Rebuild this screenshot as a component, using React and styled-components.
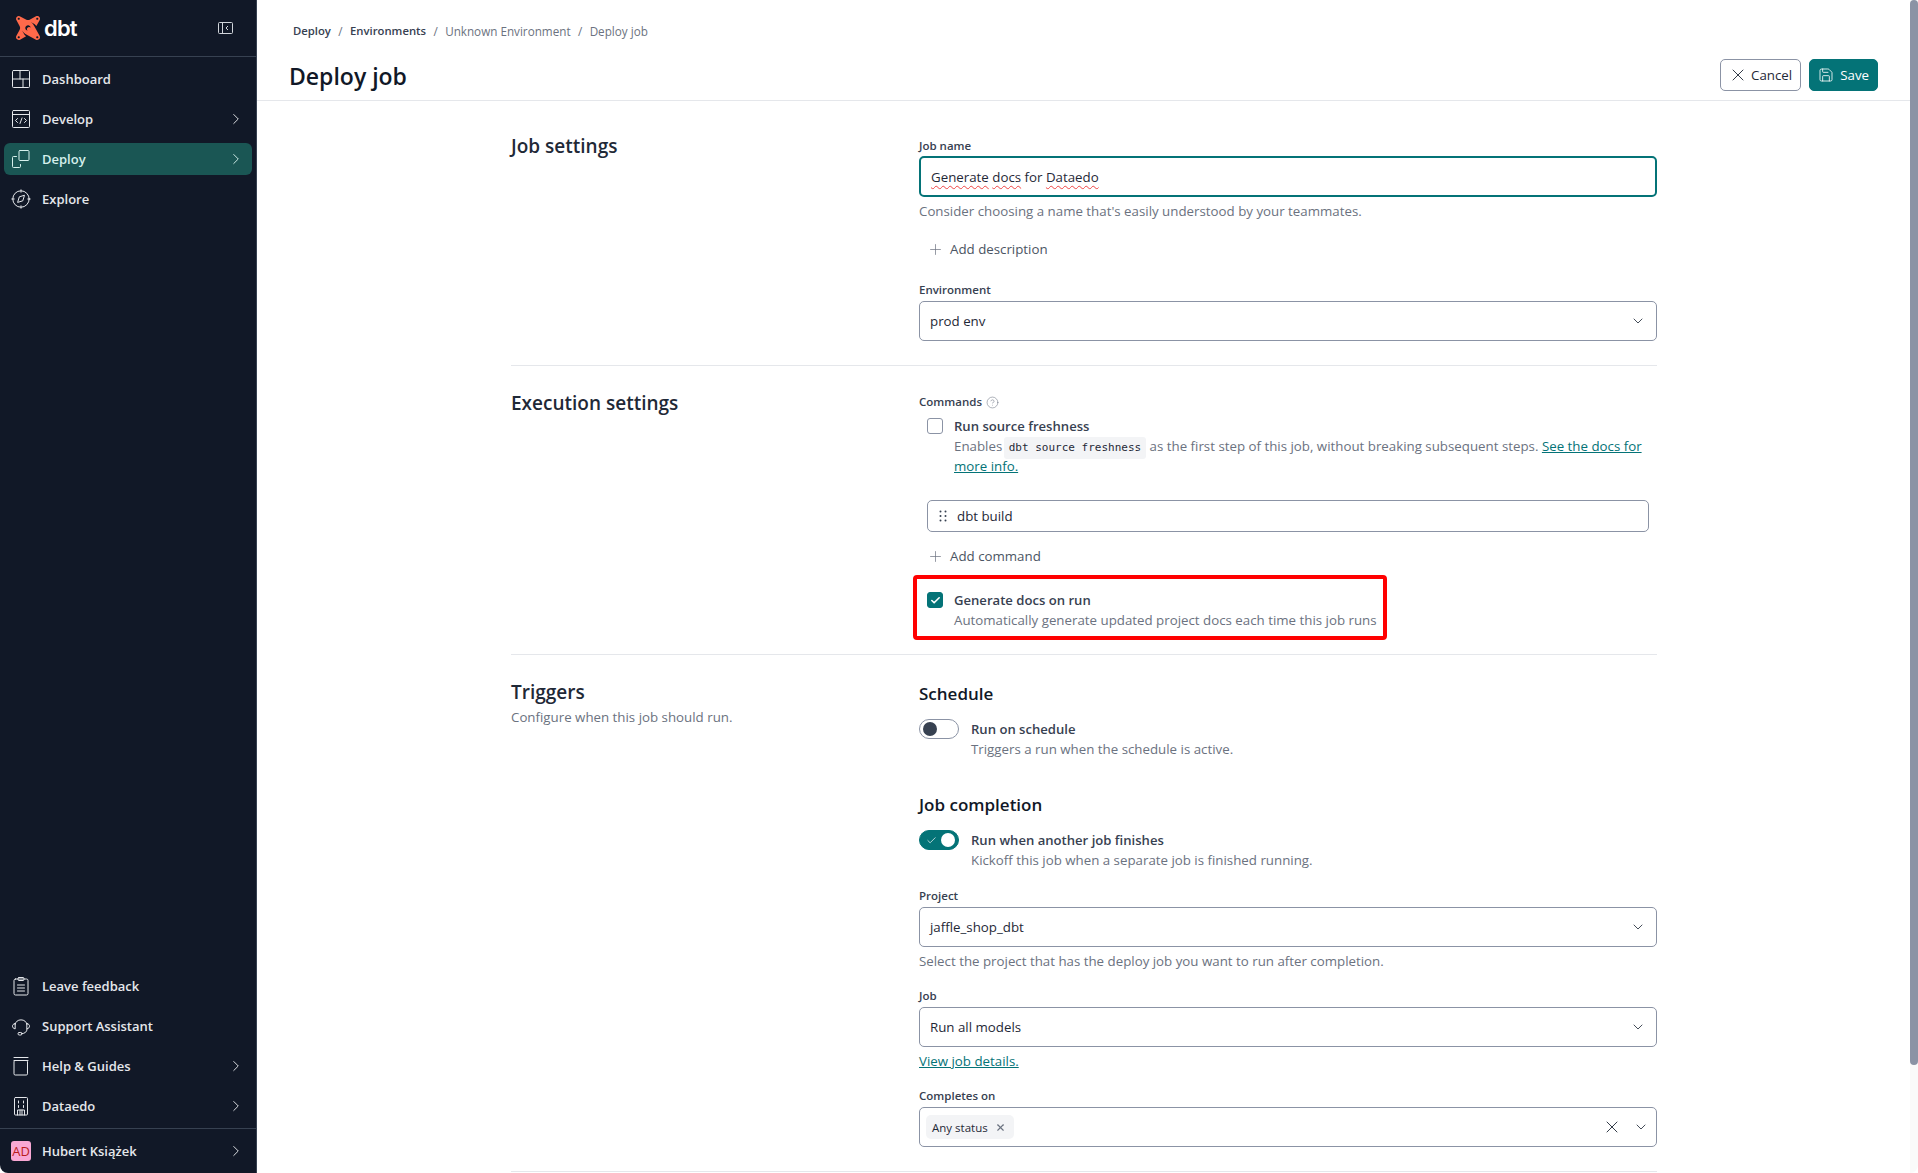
import React from "react";
import styled, { createGlobalStyle } from "styled-components";
import { SiDbt } from "react-icons/si";
import { ChevronRight, ChevronDown, X, Plus, Save, Check, CircleHelp } from "lucide-react";

const FONT = `"Open Sans", "Noto Sans", sans-serif`;
const TEAL = "#047377";

const Global = createGlobalStyle`
  html, body { margin: 0; padding: 0; height: 100%; background: #fff; }
  body { font-family: ${FONT}; color: #1f2937; overflow: hidden; }
  * { box-sizing: border-box; }
`;

const Ico = ({ children }) => (
  <svg width="20" height="20" viewBox="0 0 20 20" fill="none" stroke="currentColor" strokeWidth="1" strokeLinecap="round" strokeLinejoin="round">
    {children}
  </svg>
);

const DashboardIcon = () => (
  <Ico>
    <rect x="1.5" y="1.5" width="17" height="17" rx="1" />
    <path d="M1.5 10h17M9 1.5V10M12 10v8.5" />
  </Ico>
);
const DevelopIcon = () => (
  <Ico>
    <rect x="1.5" y="1.5" width="17" height="17" rx="1" />
    <path d="M1.5 5.5h17M6.5 9.5 4.5 11.5l2 2M13.5 9.5l2 2-2 2M11 9l-2 5.5" />
  </Ico>
);
const DeployIcon = () => (
  <Ico>
    <rect x="8" y="1.5" width="10" height="10" rx="1" />
    <path d="M5.5 7.5h-3a1 1 0 0 0-1 1v9a1 1 0 0 0 1 1h6a1 1 0 0 0 1-1v-2" />
  </Ico>
);
const ExploreIcon = () => (
  <Ico>
    <circle cx="10" cy="10" r="8.2" />
    <path d="M10 .8v2.4M10 16.8v2.4M.8 10h2.4M16.8 10h2.4M13.4 6.6l-1.6 5.2-5.2 1.6 1.6-5.2z" />
  </Ico>
);
const FeedbackIcon = () => (
  <Ico>
    <rect x="3" y="3" width="14" height="16" rx="1.5" />
    <rect x="7" y="1.5" width="6" height="3" rx="1" />
    <path d="M6.5 9h7M6.5 12h7M6.5 15h7" />
  </Ico>
);
const SupportIcon = () => (
  <Ico>
    <path d="M4 8.5a6.2 6.2 0 0 1 12 0M3.8 7.5C2.2 8 1.5 9 1.5 10.2s.7 2.2 2.3 2.6zM16.2 7.5c1.6.5 2.3 1.500 2.300 2.700s-.7 2.200-2.300 2.600zM16 13c0 3-2 4.500-5.500 4.700" />
    <rect x="7" y="16.500" width="4" height="2.500" rx="1.200" />
  </Ico>
);
const HelpIcon = () => (
  <Ico>
    <path d="M3 1.500h14M3 4.500h14" />
    <rect x="3" y="4.500" width="13.500" height="14.500" rx="1.200" />
  </Ico>
);
const OrgIcon = () => (
  <Ico>
    <rect x="3.500" y="1.500" width="13" height="17.500" rx="1" />
    <path d="M7.500 5v2M12.500 5v2M7.500 9.500v2M12.500 9.500v2M6.500 19v-5h7v5M9 14v5M11 14v5" />
  </Ico>
);

const Page = styled.div`
  display: flex;
  height: 100vh;
  overflow: hidden;
  border-radius: 0 0 8px 8px;
`;

const Sidebar = styled.aside`
  width: 257px;
  flex: none;
  background: #111827;
  border-right: 1px solid #374151;
  display: flex;
  flex-direction: column;
`;

const Brand = styled.div`
  height: 57px;
  flex: none;
  border-bottom: 1px solid #374151;
  display: flex;
  align-items: center;
  padding: 0 23px 0 16px;
  color: #fff;
  svg.logo { color: #ff694a; }
`;

const BrandName = styled.span`
  font-family: "Inter", sans-serif;
  font-weight: 600;
  font-size: 22px;
  letter-spacing: -0.8px;
  margin-left: 4px;
  flex: 1;
  line-height: 1;
`;

const CollapseIcon = styled.svg`
  width: 15px;
  height: 12px;
  color: #d1d5db;
`;

const NavList = styled.nav`
  display: flex;
  flex-direction: column;
  gap: 8px;
  padding: 6px 4px 0;
  flex: ${(p) => (p.$grow ? 1 : "none")};
`;

const NavItem = styled.a`
  height: 32px;
  border-radius: 6px;
  display: flex;
  align-items: center;
  padding: 0 7px 0 8px;
  background: ${(p) => (p.$active ? "#1a5654" : "transparent")};
  color: ${(p) => (p.$active ? "#d5f0ec" : "#e5e7eb")};
  font-size: 13px;
  font-weight: 600;
`;

const NavGlyph = styled.span`
  width: 20px;
  height: 20px;
  display: flex;
  margin-right: 11px;
  margin-left: -1px;
`;

const NavLabel = styled.span`
  flex: 1;
`;

const UserRow = styled.div`
  border-top: 1px solid #374151;
  margin-top: 6px;
  height: 45px;
  padding: 0 4px;
  display: flex;
  align-items: center;
`;

const UserItem = styled(NavItem)`
  flex: 1;
`;

const Avatar = styled.span`
  width: 20px;
  height: 20px;
  border-radius: 3px;
  background: #f9a8d4;
  color: #b91c1c;
  font-size: 13px;
  margin: 0 11px 0 -1px;
  font-weight: 400;
  display: flex;
  align-items: center;
  justify-content: center;
`;

const Main = styled.main`
  flex: 1;
  min-width: 0;
  display: flex;
  flex-direction: column;
`;

const Header = styled.header`
  height: 101px;
  flex: none;
  border-bottom: 1px solid #e5e7eb;
  display: flex;
  align-items: flex-end;
  justify-content: space-between;
  padding: 0 32px 9px 32px;
`;

const HeaderText = styled.div`
  display: flex;
  flex-direction: column;
  align-self: stretch;
  padding-top: 22px;
`;

const Crumbs = styled.div`
  display: flex;
  align-items: center;
  font-size: 11.7px;
  line-height: 18px;
  color: #6b7280;
  padding-left: 4px;
  gap: 7.4px;
`;

const Crumb = styled.span`
  color: ${(p) => (p.$strong ? "#374151" : "#6b7280")};
  font-weight: ${(p) => (p.$strong ? 600 : 500)};
  font-size: ${(p) => (p.$strong ? "11.3px" : "11.7px")};
`;

const Title = styled.h1`
  margin: 20px 0 0;
  font-size: 23px;
  line-height: 32px;
  font-weight: 600;
  color: #111827;
`;

const Actions = styled.div`
  display: flex;
  gap: 8px;
`;

const Button = styled.button`
  height: 32px;
  border-radius: 5px;
  font: 400 13.3px ${FONT};
  display: flex;
  align-items: center;
  gap: ${(p) => (p.$primary ? 6 : 3)}px;
  padding: 0 8px 0 ${(p) => (p.$primary ? 8 : 7)}px;
  border: 1px solid ${(p) => (p.$primary ? TEAL : "#8b93a5")};
  background: ${(p) => (p.$primary ? TEAL : "#fff")};
  color: ${(p) => (p.$primary ? "#fff" : "#1f2937")};
`;

const Content = styled.div`
  flex: 1;
  padding-left: 254px;
  overflow: hidden;
`;

const Section = styled.section`
  width: 1146px;
  display: grid;
  grid-template-columns: 408px 738px;
  border-bottom: 1px solid #e5e7eb;
  padding: ${(p) => p.$pad};
`;

const SideTitle = styled.h2`
  margin: ${(p) => p.$top || 0}px 0 0;
  font-size: 19px;
  line-height: 28px;
  font-weight: 600;
  color: #1f2937;
`;

const SideHint = styled.p`
  margin: 1px 0 0;
  font-size: 13.3px;
  line-height: 20px;
  color: #6b7280;
`;

const SideColumn = styled.div`
  padding-top: ${(p) => p.$top || 0}px;
`;

const Field = styled.div`
  display: flex;
  flex-direction: column;
  margin-top: ${(p) => p.$top || 0}px;
`;

const Label = styled.label`
  font-size: 11.5px;
  line-height: 18px;
  font-weight: 600;
  color: #374151;
  display: flex;
  align-items: center;
  gap: 4px;
  margin-bottom: ${(p) => p.$gap ?? 2}px;
  svg { color: #6b7280; }
`;

const TextBox = styled.div`
  height: 41px;
  border: 2px solid ${TEAL};
  border-radius: 5px;
  padding: 0 10px;
  display: flex;
  align-items: center;
  font-size: 13.3px;
  color: #1f2937;
`;

const Misspelled = styled.span`
  text-decoration: underline wavy #ef4444 1px;
  text-underline-offset: 3px;
`;

const Help = styled.div`
  font-size: 13.3px;
  line-height: 20px;
  color: #6b7280;
  margin-top: 4px;
`;

const AddRow = styled.div`
  display: flex;
  align-items: center;
  height: 20px;
  padding-left: 8px;
  gap: 6px;
  font-size: 13.3px;
  color: #4b5563;
  margin-top: ${(p) => p.$top}px;
  svg { color: #6b7280; }
`;

const Select = styled.div`
  height: 40px;
  border: 1px solid #8b93a5;
  border-radius: 5px;
  padding: 0 ${(p) => p.$right || 10}px 0 10px;
  display: flex;
  align-items: center;
  font-size: 13.3px;
  color: #1f2937;
  gap: ${(p) => p.$gap || 10}px;
`;

const SelectValue = styled.span`
  flex: 1;
  display: flex;
`;

const Chip = styled.span`
  height: 24px;
  background: #f3f4f6;
  border-radius: 5px;
  font-size: 11.5px;
  display: flex;
  align-items: center;
  gap: 7px;
  padding: 0 8px 0 6px;
  margin-left: -4px;
  color: #1f2937;
  svg { color: #6b7280; }
`;

const CheckRow = styled.div`
  position: relative;
  display: flex;
  gap: 11px;
  padding-left: 8px;
  margin-top: ${(p) => p.$top || 0}px;
`;

const CheckMark = styled.span`
  width: 16px;
  height: 16px;
  flex: none;
  margin-top: 2px;
  border-radius: 3px;
  border: 1px solid ${(p) => (p.$on ? TEAL : "#8b93a5")};
  background: ${(p) => (p.$on ? TEAL : "#fff")};
  color: #fff;
  display: flex;
  align-items: center;
  justify-content: center;
`;

const OptionText = styled.div`
  display: flex;
  flex-direction: column;
`;

const OptionTitle = styled.div`
  font-size: 13.1px;
  line-height: 20px;
  font-weight: 600;
  color: #374151;
`;

const OptionDesc = styled.div`
  font-size: 13.3px;
  line-height: 20px;
  color: #6b7280;
`;

const Code = styled.code`
  display: inline-block;
  font-family: "DejaVu Sans Mono", monospace;
  font-size: 11px;
  line-height: 14px;
  color: #1f2937;
  background: #f3f4f6;
  border-radius: 3px;
  padding: 4px 5px;
  margin: -4px 0 -4px -2px;
`;

const DocLink = styled.a`
  color: ${TEAL};
  text-decoration: underline;
`;

const CommandBox = styled.div`
  height: 32px;
  margin: 24px 8px 0;
  border: 1px solid #8b93a5;
  border-radius: 5px;
  padding: 0 10px 0 11px;
  display: flex;
  align-items: center;
  gap: 10px;
  font-size: 13.3px;
  color: #1f2937;
  svg { color: #374151; }
`;

const Annotation = styled.div`
  position: absolute;
  left: -6px;
  top: -15px;
  width: 474px;
  height: 65px;
  border: 4px solid #ff0000;
  border-radius: 4px;
  pointer-events: none;
`;

const SubTitle = styled.h3`
  margin: ${(p) => p.$top || 0}px 0 0;
  font-size: 17px;
  line-height: 26px;
  font-weight: 600;
  color: #111827;
`;

const ToggleRow = styled.div`
  display: flex;
  gap: 12px;
  margin-top: 12px;
`;

const Toggle = styled.span`
  width: 40px;
  height: 20px;
  flex: none;
  border-radius: 10px;
  border: 1px solid ${(p) => (p.$on ? TEAL : "#8b93a5")};
  background: ${(p) => (p.$on ? TEAL : "#fff")};
  display: flex;
  align-items: center;
  justify-content: ${(p) => (p.$on ? "flex-end" : "flex-start")};
  gap: 4px;
  padding: 0 3px;
  color: #fff;
`;

const Knob = styled.span`
  width: 14px;
  height: 14px;
  border-radius: 50%;
  background: ${(p) => (p.$on ? "#fff" : "#374151")};
`;

const ScrollTrack = styled.div`
  width: 8px;
  flex: none;
  background: #fafafa;
`;

const ScrollThumb = styled.div`
  height: 1065px;
  background: #8b93a5;
  border-radius: 4px;
`;

const Nav = ({ icon, label, arrow, active }) => (
  <NavItem $active={active}>
    <NavGlyph>{icon}</NavGlyph>
    <NavLabel>{label}</NavLabel>
    {arrow && <ChevronRight size={18} strokeWidth={1.25} />}
  </NavItem>
);

const Dropdown = ({ value }) => (
  <Select>
    <SelectValue>{value}</SelectValue>
    <ChevronDown size={16} strokeWidth={1.25} />
  </Select>
);

export default function App() {
  return (
    <Page>
      <Global />
      <Sidebar>
        <Brand>
          <SiDbt className="logo" size={24} />
          <BrandName>dbt</BrandName>
          <CollapseIcon viewBox="0 0 15 12" fill="none" stroke="currentColor" strokeWidth="1">
            <rect x="0.5" y="0.5" width="14" height="11" rx="1" />
            <path d="M4.500 .5v11M10 4 8 6l2 2" />
          </CollapseIcon>
        </Brand>
        <NavList $grow>
          <Nav icon={<DashboardIcon />} label="Dashboard" />
          <Nav icon={<DevelopIcon />} label="Develop" arrow />
          <Nav icon={<DeployIcon />} label="Deploy" arrow active />
          <Nav icon={<ExploreIcon />} label="Explore" />
        </NavList>
        <NavList>
          <Nav icon={<FeedbackIcon />} label="Leave feedback" />
          <Nav icon={<SupportIcon />} label="Support Assistant" />
          <Nav icon={<HelpIcon />} label="Help & Guides" arrow />
          <Nav icon={<OrgIcon />} label="Dataedo" arrow />
        </NavList>
        <UserRow>
          <UserItem>
            <Avatar>AD</Avatar>
            <NavLabel>Hubert Książek</NavLabel>
            <ChevronRight size={18} strokeWidth={1.25} />
          </UserItem>
        </UserRow>
      </Sidebar>

      <Main>
        <Header>
          <HeaderText>
            <Crumbs>
              <Crumb $strong>Deploy</Crumb>/
              <Crumb $strong>Environments</Crumb>/
              <Crumb>Unknown Environment</Crumb>/
              <Crumb>Deploy job</Crumb>
            </Crumbs>
            <Title>Deploy job</Title>
          </HeaderText>
          <Actions>
            <Button>
              <X size={20} strokeWidth={1.1} />
              Cancel
            </Button>
            <Button $primary>
              <Save size={16} strokeWidth={1.25} />
              Save
            </Button>
          </Actions>
        </Header>

        <Content>
          <Section $pad="36px 0 24px">
            <SideTitle $top={-5}>Job settings</SideTitle>
            <div>
              <Field>
                <Label $gap={1}>Job name</Label>
                <TextBox>
                  <span>
                    <Misspelled>Generate</Misspelled> <Misspelled>docs</Misspelled> for <Misspelled>Dataedo</Misspelled>
                  </span>
                </TextBox>
                <Help>Consider choosing a name that's easily understood by your teammates.</Help>
              </Field>
              <AddRow $top={18}>
                <Plus size={17} strokeWidth={1} />
                Add description
              </AddRow>
              <Field $top={22}>
                <Label>Environment</Label>
                <Dropdown value="prod env" />
              </Field>
            </div>
          </Section>

          <Section $pad="23px 0 24px">
            <SideTitle>Execution settings</SideTitle>
            <SideColumn $top={4}>
              <Label $gap={5}>
                Commands <CircleHelp size={13} strokeWidth={1} />
              </Label>
              <CheckRow>
                <CheckMark />
                <OptionText>
                  <OptionTitle>Run source freshness</OptionTitle>
                  <OptionDesc>
                    Enables <Code>dbt source freshness</Code> as the first step of this job, without breaking subsequent steps.{" "}
                    <DocLink>See the docs for more info.</DocLink>
                  </OptionDesc>
                </OptionText>
              </CheckRow>
              <CommandBox>
                <svg width="8" height="12" viewBox="0 0 8 12" fill="currentColor">
                  <circle cx="1.500" cy="1.500" r="1" /><circle cx="6.500" cy="1.500" r="1" />
                  <circle cx="1.500" cy="6" r="1" /><circle cx="6.500" cy="6" r="1" />
                  <circle cx="1.500" cy="10.500" r="1" /><circle cx="6.500" cy="10.500" r="1" />
                </svg>
                dbt build
              </CommandBox>
              <AddRow $top={14}>
                <Plus size={17} strokeWidth={1} />
                Add command
              </AddRow>
              <CheckRow $top={24}>
                <Annotation />
                <CheckMark $on>
                  <Check size={11} strokeWidth={3.5} />
                </CheckMark>
                <OptionText>
                  <OptionTitle>Generate docs on run</OptionTitle>
                  <OptionDesc>Automatically generate updated project docs each time this job runs</OptionDesc>
                </OptionText>
              </CheckRow>
            </SideColumn>
          </Section>

          <Section $pad="23px 0 24px">
            <div>
              <SideTitle>Triggers</SideTitle>
              <SideHint>Configure when this job should run.</SideHint>
            </div>
            <div>
              <SubTitle $top={3}>Schedule</SubTitle>
              <ToggleRow>
                <Toggle>
                  <Knob />
                </Toggle>
                <OptionText>
                  <OptionTitle>Run on schedule</OptionTitle>
                  <OptionDesc>Triggers a run when the schedule is active.</OptionDesc>
                </OptionText>
              </ToggleRow>
              <SubTitle $top={33}>Job completion</SubTitle>
              <ToggleRow>
                <Toggle $on>
                  <Check size={11} strokeWidth={1.5} />
                  <Knob $on />
                </Toggle>
                <OptionText>
                  <OptionTitle>Run when another job finishes</OptionTitle>
                  <OptionDesc>Kickoff this job when a separate job is finished running.</OptionDesc>
                </OptionText>
              </ToggleRow>
              <Field $top={17}>
                <Label>Project</Label>
                <Dropdown value="jaffle_shop_dbt" />
                <Help>Select the project that has the deploy job you want to run after completion.</Help>
              </Field>
              <Field $top={16}>
                <Label>Job</Label>
                <Dropdown value="Run all models" />
                <Help>
                  <DocLink>View job details.</DocLink>
                </Help>
              </Field>
              <Field $top={16}>
                <Label>Completes on</Label>
                <Select $right={7} $gap={11}>
                  <SelectValue>
                    <Chip>
                      Any status
                      <X size={11} strokeWidth={2.5} />
                    </Chip>
                  </SelectValue>
                  <X size={20} strokeWidth={1.1} />
                  <ChevronDown size={16} strokeWidth={1.25} />
                </Select>
              </Field>
            </div>
          </Section>
        </Content>
      </Main>

      <ScrollTrack>
        <ScrollThumb />
      </ScrollTrack>
    </Page>
  );
}
